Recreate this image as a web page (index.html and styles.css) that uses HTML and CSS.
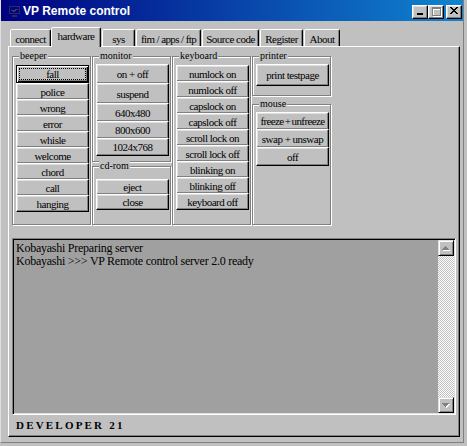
FILE: index.html
```html
<!DOCTYPE html>
<html>
<head>
<meta charset="utf-8">
<title>VP Remote control</title>
<link rel="stylesheet" href="styles.css">
</head>
<body>
<div class="window">
  <div class="titlebar">
    <svg class="app-icon" width="11" height="11" viewBox="0 0 11 11" shape-rendering="crispEdges">
      <rect x="0.5" y="0.5" width="10" height="7" fill="none" stroke="#2c2c58"/>
      <path d="M2 4h2l1 2 2-3h2" stroke="#3c3c68" fill="none"/>
      <rect x="3" y="9" width="5" height="2" fill="#2c2c58"/>
    </svg>
    <span class="title">VP Remote control</span>
    <div class="caption-btns">
      <span class="cap-btn cap-min"><span class="glyph-min"></span></span>
      <span class="cap-btn cap-max">
        <svg width="10" height="10" viewBox="0 0 10 10" shape-rendering="crispEdges">
          <path transform="translate(1 1)" fill="#fff" d="M0 0h9v2H0zM0 2h1v7H0zM8 2h1v7H8zM0 8h9v1H0z"/>
          <path fill="#808080" d="M0 0h9v2H0zM0 2h1v7H0zM8 2h1v7H8zM0 8h9v1H0z"/>
        </svg>
      </span>
      <span class="cap-btn cap-close">
        <svg width="8" height="7" viewBox="0 0 8 7" shape-rendering="crispEdges">
          <path fill="#000" d="M0 0h2v1H0zM6 0h2v1H6zM1 1h2v1H1zM5 1h2v1H5zM2 2h4v1H2zM3 3h2v1H3zM2 4h4v1H2zM1 5h2v1H1zM5 5h2v1H5zM0 6h2v1H0zM6 6h2v1H6z"/>
        </svg>
      </span>
    </div>
  </div>

  <div class="tabs">
    <div class="tab t-connect">connect</div>
    <div class="tab active t-hardware">hardware</div>
    <div class="tab t-sys">sys</div>
    <div class="tab t-fim">fim / apps / ftp</div>
    <div class="tab t-source">Source code</div>
    <div class="tab t-register">Register</div>
    <div class="tab t-about">About</div>
  </div>

  <div class="panel">
    <div class="groups">
      <div class="col">
        <div class="group g-beeper">
          <div class="glabel">beeper</div>
          <div class="stack mt4">
            <button class="btn default">fall</button>
            <button class="btn">police</button>
            <button class="btn">wrong</button>
            <button class="btn">error</button>
            <button class="btn">whisle</button>
            <button class="btn">welcome</button>
            <button class="btn">chord</button>
            <button class="btn">call</button>
            <button class="btn">hanging</button>
          </div>
        </div>
      </div>

      <div class="col">
        <div class="group g-monitor">
          <div class="glabel">monitor</div>
          <div class="stack mt3">
            <button class="btn h20">on + off</button>
            <button class="btn h21">suspend</button>
            <button class="btn h19">640x480</button>
            <button class="btn h18">800x600</button>
            <button class="btn h18">1024x768</button>
          </div>
        </div>
        <div class="group g-cdrom">
          <div class="glabel">cd-rom</div>
          <div class="stack mt8">
            <button class="btn h16">eject</button>
            <button class="btn h16">close</button>
          </div>
        </div>
      </div>

      <div class="col">
        <div class="group g-keyboard">
          <div class="glabel">keyboard</div>
          <div class="stack mt4">
            <button class="btn">numlock on</button>
            <button class="btn">numlock off</button>
            <button class="btn">capslock on</button>
            <button class="btn">capslock off</button>
            <button class="btn">scroll lock on</button>
            <button class="btn">scroll lock off</button>
            <button class="btn">blinking on</button>
            <button class="btn">blinking off</button>
            <button class="btn">keyboard off</button>
          </div>
        </div>
      </div>

      <div class="col">
        <div class="group g-printer">
          <div class="glabel">printer</div>
          <div class="stack mt3">
            <button class="btn h22">print testpage</button>
          </div>
        </div>
        <div class="group g-mouse">
          <div class="glabel">mouse</div>
          <div class="stack mt3">
            <button class="btn h18 tight">freeze + unfreeze</button>
            <button class="btn h19">swap + unswap</button>
            <button class="btn h19">off</button>
          </div>
        </div>
      </div>
    </div>

    <div class="log">
      <div class="log-text">
        <div>Kobayashi Preparing server</div>
        <div>Kobayashi &gt;&gt;&gt; VP Remote control server 2.0 ready</div>
      </div>
      <div class="vscroll">
        <span class="sbtn">
          <svg width="8" height="5" viewBox="0 0 8 5" shape-rendering="crispEdges">
            <path transform="translate(1 1)" fill="#fff" d="M3 0h1v1H3zM2 1h3v1H2zM1 2h5v1H1zM0 3h7v1H0z"/>
            <path fill="#808080" d="M3 0h1v1H3zM2 1h3v1H2zM1 2h5v1H1zM0 3h7v1H0z"/>
          </svg>
        </span>
        <span class="sbtn">
          <svg width="8" height="5" viewBox="0 0 8 5" shape-rendering="crispEdges">
            <path transform="translate(1 1)" fill="#fff" d="M0 0h7v1H0zM1 1h5v1H1zM2 2h3v1H2zM3 3h1v1H3z"/>
            <path fill="#808080" d="M0 0h7v1H0zM1 1h5v1H1zM2 2h3v1H2zM3 3h1v1H3z"/>
          </svg>
        </span>
      </div>
    </div>

    <div class="footer">DEVELOPER 21</div>
  </div>
</div>
</body>
</html>
```

FILE: styles.css
```css
* {
  box-sizing: border-box;
}

html,
body {
  margin: 0;
  padding: 0;
}

body {
  width: 467px;
  height: 446px;
  overflow: hidden;
  background: #c0c0c0;
  color: #000;
  font-family: "Liberation Serif", "Times New Roman", serif;
}

.window {
  width: 464px;
  height: 443px;
  border-left: 1px solid #dfdfdf;
  border-right: 1px solid #808080;
  border-bottom: 1px solid #808080;
}

/* ---------- title bar ---------- */
.titlebar {
  height: 21px;
  display: flex;
  align-items: flex-start;
  padding-right: 1px;
  background: linear-gradient(to right, #000080, #1084d0);
}

.app-icon {
  flex: none;
  margin: 6px 3px 0 8px;
}

.title {
  font-family: "Liberation Sans", Arial, sans-serif;
  font-weight: bold;
  font-size: 12px;
  line-height: 19px;
  padding-top: 2px;
  color: #fff;
  white-space: nowrap;
}

.caption-btns {
  margin-left: auto;
  margin-top: 5px;
  display: flex;
}

.cap-btn {
  display: flex;
  align-items: flex-start;
  width: 16px;
  height: 14px;
  background: #c0c0c0;
  border: 1px solid;
  border-color: #fff #000 #000 #fff;
  box-shadow: inset -1px -1px #808080, inset 1px 1px #dfdfdf;
}

.cap-min {
  padding: 7px 0 0 4px;
}

.glyph-min {
  display: block;
  width: 6px;
  height: 2px;
  background: #000;
}

.cap-max {
  padding: 1px 0 0 3px;
}

.cap-close {
  margin-left: 2px;
  padding: 1px 0 0 3px;
}

/* ---------- tabs ---------- */
.tabs {
  height: 19px;
  margin-top: 6px;
  margin-left: 9px;
  display: flex;
  align-items: flex-end;
}

.tab {
  height: 17px;
  padding-top: 3px;
  border: 1px solid;
  border-bottom: none;
  border-color: #fff #000 transparent #fff;
  border-radius: 2px 2px 0 0;
  box-shadow: inset -1px 0 #808080;
  background: #c0c0c0;
  font-size: 11px;
  letter-spacing: -0.5px;
  line-height: 12px;
  text-align: center;
  white-space: nowrap;
}

.tab.active {
  position: relative;
  z-index: 1;
  height: 20px;
  padding-top: 2px;
  margin-bottom: -1px;
}

.t-connect { width: 41px; }
.t-hardware { width: 50px; }
.t-sys { width: 33px; margin-left: 1px; }
.t-fim { width: 65px; margin-left: 1px; letter-spacing: -0.6px; }
.t-source { width: 57px; margin-left: 1px; }
.t-register { width: 43px; margin-left: 1px; }
.t-about { width: 36px; margin-left: 1px; }

/* ---------- panel ---------- */
.panel {
  margin-left: 7px;
  width: 452px;
  height: 391px;
  padding: 9px 2px 0 3px;
  border: 1px solid;
  border-color: #fff #000 #000 #fff;
  box-shadow: inset -1px -1px #808080;
}

.groups {
  display: flex;
  gap: 1px;
  height: 169px;
}

.col {
  width: 79px;
  display: flex;
  flex-direction: column;
}

.group {
  border: 1px solid #808080;
  box-shadow: inset 1px 1px #fff, 1px 1px #fff;
  padding-left: 3px;
}

.g-beeper,
.g-keyboard { height: 169px; }
.g-monitor { height: 106px; }
.g-cdrom { height: 59px; margin-top: 4px; }
.g-printer { height: 40px; }
.g-mouse { height: 121px; margin-top: 8px; }

.glabel {
  width: max-content;
  height: 11px;
  margin: -7px 0 0 3px;
  padding: 0 1px;
  background: #c0c0c0;
  font-size: 10px;
  line-height: 11px;
  white-space: nowrap;
}

.stack { width: 73px; }
.mt3 { margin-top: 3px; }
.mt4 { margin-top: 4px; }
.mt8 { margin-top: 8px; }

.btn {
  display: block;
  width: 73px;
  height: 17px;
  margin: -1px 0 0;
  padding: 0;
  border: 1px solid;
  border-color: #fff #000 #000 #fff;
  border-radius: 0;
  box-shadow: inset -1px -1px #808080, inset 1px 1px #dfdfdf;
  background: #c0c0c0;
  color: #000;
  font-family: "Liberation Serif", "Times New Roman", serif;
  font-size: 11px;
  letter-spacing: -0.5px;
  line-height: 12px;
  text-align: center;
  white-space: nowrap;
}

.btn.tight {
  letter-spacing: -0.6px;
  word-spacing: -1px;
}

.btn:first-child { margin-top: 0; }

.btn.default {
  height: 18px;
  border-color: #000;
  box-shadow: inset 1px 1px #fff, inset -1px -1px #000, inset -2px -2px #808080;
  outline: 1px dotted #000;
  outline-offset: -4px;
}

.btn.default + .btn { margin-top: 0; }

.h16 { height: 16px; }
.h18 { height: 18px; }
.h19 { height: 19px; }
.h20 { height: 20px; }
.h21 { height: 21px; }
.h22 { height: 22px; }

/* ---------- log ---------- */
.log {
  margin-top: 13px;
  width: 444px;
  height: 177px;
  padding: 1px;
  display: flex;
  border: 1px solid;
  border-color: #808080 #fff #fff #808080;
  box-shadow: inset 1px 1px #000, inset -1px -1px #dfdfdf;
  background: #a0a0a0;
}

.log-text {
  flex: 1;
  padding: 2px 0 0 2px;
  font-size: 12px;
  letter-spacing: -0.25px;
  line-height: 13px;
  white-space: nowrap;
}

.vscroll {
  width: 16px;
  display: flex;
  flex-direction: column;
  justify-content: space-between;
  background: repeating-conic-gradient(#fff 0 25%, #c0c0c0 0 50%) 0 0 / 2px 2px;
}

.sbtn {
  width: 16px;
  height: 16px;
  display: flex;
  align-items: center;
  justify-content: center;
  background: #c0c0c0;
  border: 1px solid;
  border-color: #dfdfdf #000 #000 #dfdfdf;
  box-shadow: inset 1px 1px #fff, inset -1px -1px #808080;
}

/* ---------- footer ---------- */
.footer {
  height: 20px;
  padding-left: 4px;
  font-weight: bold;
  font-size: 11px;
  letter-spacing: 2.2px;
  line-height: 20px;
  white-space: nowrap;
}
```
